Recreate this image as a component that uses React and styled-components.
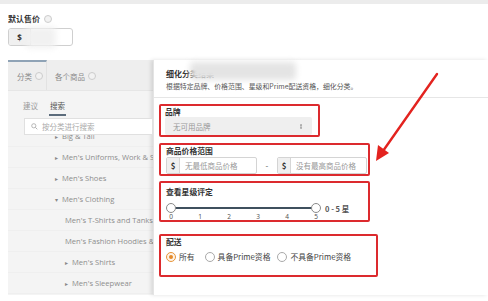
import React from 'react';
import styled, { createGlobalStyle } from 'styled-components';

const GlobalStyle = createGlobalStyle`
  html, body { margin: 0; padding: 0; background: #fff; }
  body { font-family: "Noto Sans", "Noto Sans CJK SC", sans-serif; }
`;

const Page = styled.div`
  position: relative;
  width: 488px;
  height: 301px;
  overflow: hidden;
  background: #fff;
`;

const TopStrip = styled.div`
  height: 4px;
  background: #ececec;
`;

const PriceBlock = styled.div`
  padding: 9px 8px 0;
`;

const FieldLabel = styled.div`
  display: flex;
  align-items: center;
  gap: 4px;
  font-family: "Noto Sans CJK SC", sans-serif;
  font-size: 8px;
  font-weight: 700;
  color: #333;
  line-height: 12px;
`;

const InfoDot = styled.span`
  display: inline-block;
  flex-shrink: 0;
  width: 6px;
  height: 6px;
  border-radius: 50%;
  border: 1px solid ${({ $light }) => ($light ? '#ccc' : '#bbb')};
  background: #f2f2f2;
`;

const PriceInput = styled.div`
  position: relative;
  display: flex;
  width: 65px;
  height: 18px;
  margin-top: 3px;
  border: 1px solid #cfcfcf;
  border-radius: 3px;
  box-sizing: border-box;
  overflow: hidden;
`;

const Prefix = styled.span`
  display: flex;
  align-items: center;
  justify-content: center;
  flex-shrink: 0;
  width: ${({ $w }) => $w || 21}px;
  background: #f0f0f0;
  border-right: 1px solid #d6d6d6;
  font-size: 8px;
  font-weight: 700;
  color: #333;
`;

const Smudge = styled.div`
  position: absolute;
  left: ${({ $x }) => $x}px;
  top: ${({ $y }) => $y}px;
  width: ${({ $w }) => $w}px;
  height: ${({ $h }) => $h}px;
  background: ${({ $c }) => $c};
  filter: blur(3px);
  border-radius: 4px;
`;

const Workspace = styled.div`
  display: flex;
  height: 235px;
  margin: 14px 0 0 8px;
`;

const LeftPanel = styled.div`
  width: 145px;
  flex-shrink: 0;
  background: #f4f4f4;
  display: flex;
  flex-direction: column;
  overflow: hidden;
`;

const TabRow = styled.div`
  display: flex;
  height: 30px;
  background: #eeeeee;
  border-bottom: 1px solid #e6e6e6;
`;

const Tab = styled.div`
  display: flex;
  align-items: center;
  gap: 3px;
  padding-left: ${({ $pl }) => $pl}px;
  box-sizing: border-box;
  white-space: nowrap;
  border-top: 2px solid ${({ $active }) => ($active ? '#8fa3b6' : 'transparent')};
  border-right: ${({ $active }) => ($active ? '1px solid #e2e2e2' : 'none')};
  width: ${({ $w }) => $w}px;
  font-family: "Noto Sans CJK SC", sans-serif;
  font-size: 7.5px;
  color: #8a8a8a;
`;

const SubTabs = styled.div`
  display: flex;
  gap: 10px;
  padding: 7px 0 0 14px;
`;

const SubTab = styled.div`
  height: 18px;
  line-height: 16px;
  box-sizing: border-box;
  padding: 0 1px;
  font-family: "Noto Sans CJK SC", sans-serif;
  font-size: 7.5px;
  color: ${({ $active }) => ($active ? '#555' : '#999')};
  border-bottom: 2px solid ${({ $active }) => ($active ? '#5c6c7c' : 'transparent')};
`;

const SearchBox = styled.div`
  position: relative;
  z-index: 1;
  display: flex;
  align-items: center;
  gap: 4px;
  height: 17px;
  margin: 2px 0 0 16px;
  padding-left: 6px;
  box-sizing: border-box;
  background: #fff;
  border: 1px solid #e0e0e0;
  font-family: "Noto Sans CJK SC", sans-serif;
  font-size: 7.5px;
  color: #aaa;
`;

const TreeViewport = styled.div`
  flex: 1;
  overflow: hidden;
`;

const TreeList = styled.div`
  margin-top: -9px;
`;

const TreeRow = styled.div`
  height: 21px;
  line-height: 21px;
  padding-left: ${({ $level }) => ($level === 2 ? 57 : 47)}px;
  border-bottom: 1px solid #efefef;
  box-sizing: border-box;
  white-space: nowrap;
  font-family: "Open Sans", sans-serif;
  font-size: 7.6px;
  color: #8d8d8d;
`;

const Caret = styled.span`
  display: inline-block;
  width: 7px;
  font-size: 6px;
  color: #888;
`;

const Modal = styled.div`
  flex: 1;
  position: relative;
  background: #fff;
  box-shadow: -2px 0 4px rgba(0, 0, 0, 0.12);
  border-left: 1px solid #e4e4e4;
`;

const ModalHeader = styled.div`
  height: 38px;
  padding: 8px 0 0 12px;
  box-sizing: border-box;
  border-bottom: 1px solid #e6e6e6;
  font-family: "Noto Sans CJK SC", sans-serif;
`;

const ModalTitle = styled.div`
  font-size: 8px;
  font-weight: 700;
  color: #333;
  line-height: 11px;
`;

const ModalDesc = styled.div`
  margin-top: 2px;
  font-size: 6.9px;
  color: #555;
  line-height: 10px;
`;

const ModalBody = styled.div`
  padding-left: 5px;
  font-family: "Noto Sans CJK SC", sans-serif;
`;

const RedBox = styled.div`
  width: ${({ $w }) => $w}px;
  margin-top: ${({ $mt }) => $mt}px;
  padding: ${({ $pad }) => $pad};
  box-sizing: border-box;
  border: 2px solid #dc2a2e;
  border-radius: 2px;
`;

const BoxLabel = styled.div`
  height: 10px;
  font-size: 7.8px;
  font-weight: 700;
  color: #333;
  line-height: 10px;
`;

const Select = styled.div`
  display: flex;
  align-items: center;
  justify-content: space-between;
  width: 147px;
  height: 18px;
  padding: 0 8px;
  box-sizing: border-box;
  background: #efefef;
  border-radius: 2px;
  font-size: 7.5px;
  color: #999;
`;

const SortArrows = styled.span`
  font-size: 7px;
  color: #777;
  transform: scaleX(0.7);
`;

const RangeRow = styled.div`
  display: flex;
  align-items: center;
  margin-top: 1px;
`;

const MoneyInput = styled.div`
  display: flex;
  width: ${({ $w }) => $w}px;
  height: 17px;
  box-sizing: border-box;
  border: 1px solid #d4d4d4;
  border-radius: 2px;
  overflow: hidden;
`;

const MoneyText = styled.span`
  display: flex;
  align-items: center;
  padding-left: 5px;
  font-size: 7.5px;
  color: #999;
  white-space: nowrap;
`;

const Dash = styled.span`
  width: 20px;
  text-align: center;
  font-size: 8px;
  color: #555;
`;

const SliderRow = styled.div`
  display: flex;
  align-items: center;
  height: 10px;
  margin-top: 6px;
`;

const Track = styled.div`
  position: relative;
  display: flex;
  align-items: center;
  justify-content: space-between;
  width: 155px;
  height: 10px;
  &::before {
    content: '';
    position: absolute;
    left: 5px;
    right: 5px;
    top: 4px;
    height: 2px;
    background: #3f505e;
  }
`;

const Knob = styled.span`
  position: relative;
  width: 10px;
  height: 10px;
  box-sizing: border-box;
  border-radius: 50%;
  background: #fff;
  border: 1px solid #8a8a8a;
`;

const RangeValue = styled.span`
  margin-left: 4px;
  font-size: 7.5px;
  font-weight: 700;
  color: #555;
`;

const Ticks = styled.div`
  display: flex;
  justify-content: space-between;
  width: 151px;
  margin-left: 2px;
  line-height: 7px;
  font-family: "Noto Sans", sans-serif;
  font-size: 6.5px;
  color: #555;
  span { width: 6px; text-align: center; }
`;

const RadioRow = styled.div`
  display: flex;
  align-items: center;
  height: 12px;
  margin-top: 4px;
`;

const RadioItem = styled.label`
  display: flex;
  align-items: center;
  gap: 3px;
  height: 12px;
  line-height: 12px;
  margin-right: ${({ $mr }) => $mr}px;
  font-size: 7.8px;
  color: #444;
  white-space: nowrap;
`;

const RadioDot = styled.span`
  display: flex;
  align-items: center;
  justify-content: center;
  flex-shrink: 0;
  width: 10px;
  height: 10px;
  box-sizing: border-box;
  border-radius: 50%;
  border: 1px solid ${({ $on }) => ($on ? '#e7953a' : '#a9a9a9')};
  background: ${({ $on }) => ($on ? '#fdf3e6' : '#fff')};
  &::after {
    content: '';
    width: 4px;
    height: 4px;
    border-radius: 50%;
    background: ${({ $on }) => ($on ? '#e48a2a' : 'transparent')};
  }
`;

const ArrowLayer = styled.svg`
  position: absolute;
  left: 0;
  top: 0;
  pointer-events: none;
`;

const tree = [
  { level: 1, caret: '▸', text: 'Big & Tall' },
  { level: 1, caret: '▸', text: "Men's Uniforms, Work & Safety" },
  { level: 1, caret: '▸', text: "Men's Shoes" },
  { level: 1, caret: '▾', text: "Men's Clothing" },
  { level: 2, caret: '', text: "Men's T-Shirts and Tanks" },
  { level: 2, caret: '', text: "Men's Fashion Hoodies & Sweatshirts" },
  { level: 2, caret: '▸', text: "Men's Shirts" },
  { level: 2, caret: '▸', text: "Men's Sleepwear" },
];

const ticks = [0, 1, 2, 3, 4, 5];

export default function App() {
  return (
    <Page>
      <GlobalStyle />
      <TopStrip />
      <PriceBlock>
        <FieldLabel>
          默认售价 <InfoDot $light />
        </FieldLabel>
        <PriceInput>
          <Prefix>$</Prefix>
        </PriceInput>
      </PriceBlock>

      <Workspace>
        <LeftPanel>
          <TabRow>
            <Tab $active $w={39} $pl={9}>
              分类 <InfoDot $light />
            </Tab>
            <Tab $w={70} $pl={8}>
              各个商品 <InfoDot $light />
            </Tab>
          </TabRow>
          <SubTabs>
            <SubTab>建议</SubTab>
            <SubTab $active>搜索</SubTab>
          </SubTabs>
          <SearchBox>
            <svg width="7" height="7" viewBox="0 0 10 10">
              <circle cx="4" cy="4" r="3" fill="none" stroke="#aaa" strokeWidth="1.2" />
              <line x1="6.3" y1="6.3" x2="9" y2="9" stroke="#aaa" strokeWidth="1.3" />
            </svg>
            按分类进行搜索
          </SearchBox>
          <TreeViewport>
            <TreeList>
              {tree.map((item) => (
                <TreeRow key={item.text} $level={item.level}>
                  {item.caret && <Caret>{item.caret}</Caret>}
                  {item.text}
                </TreeRow>
              ))}
            </TreeList>
          </TreeViewport>
        </LeftPanel>

        <Modal>
          <ModalHeader>
            <ModalTitle>细化分类结果</ModalTitle>
            <ModalDesc>根据特定品牌、价格范围、星级和Prime配送资格，细化分类。</ModalDesc>
          </ModalHeader>
          <ModalBody>
            <RedBox $w={161} $mt={6} $pad="1px 4px 0">
              <BoxLabel>品牌</BoxLabel>
              <Select>
                无可用品牌
                <SortArrows>⇕</SortArrows>
              </Select>
            </RedBox>

            <RedBox $w={211} $mt={6} $pad="1px 1px 0 5px">
              <BoxLabel>商品价格范围</BoxLabel>
              <RangeRow>
                <MoneyInput $w={91}>
                  <Prefix $w={12}>$</Prefix>
                  <MoneyText>无最低商品价格</MoneyText>
                </MoneyInput>
                <Dash>-</Dash>
                <MoneyInput $w={90}>
                  <Prefix $w={12}>$</Prefix>
                  <MoneyText>没有最高商品价格</MoneyText>
                </MoneyInput>
              </RangeRow>
            </RedBox>

            <RedBox $w={211} $mt={5} $pad="4px 4px 0 5px">
              <BoxLabel>查看星级评定</BoxLabel>
              <SliderRow>
                <Track>
                  <Knob />
                  <Knob />
                </Track>
                <RangeValue>0 - 5 星</RangeValue>
              </SliderRow>
              <Ticks>
                {ticks.map((t) => (
                  <span key={t}>{t}</span>
                ))}
              </Ticks>
            </RedBox>

            <RedBox $w={219} $mt={12} $pad="1px 4px 12px 5px">
              <BoxLabel>配送</BoxLabel>
              <RadioRow>
                <RadioItem $mr={10}>
                  <RadioDot $on />
                  所有
                </RadioItem>
                <RadioItem $mr={7}>
                  <RadioDot />
                  具备Prime资格
                </RadioItem>
                <RadioItem $mr={0}>
                  <RadioDot />
                  不具备Prime资格
                </RadioItem>
              </RadioRow>
            </RedBox>
          </ModalBody>
        </Modal>
      </Workspace>

      <Smudge $x={26} $y={27} $w={30} $h={21} $c="#f1f1f1" />
      <Smudge $x={190} $y={62} $w={106} $h={18} $c="#e4e4e4" />

      <ArrowLayer width="488" height="301" viewBox="0 0 488 301">
        <line x1="437" y1="74" x2="383" y2="151" stroke="#e3231f" strokeWidth="2.4" strokeLinecap="round" />
        <polygon points="376,161 378,145 389,153" fill="#e3231f" />
      </ArrowLayer>
    </Page>
  );
}
